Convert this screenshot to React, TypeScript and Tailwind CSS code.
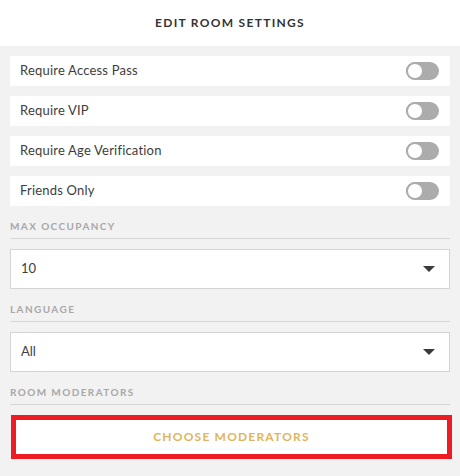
import React from "react"

const font = { fontFamily: "Lato, 'Open Sans', sans-serif" }

function Toggle() {
  return (
    <div className="relative h-[18px] w-[33px] rounded-full bg-[#acacac]">
      <div className="absolute left-0 top-0 h-[18px] w-[18px] rounded-full border-2 border-[#acacac] bg-white" />
    </div>
  )
}

function ToggleRow({ label }: { label: string }) {
  return (
    <div className="flex h-[30px] items-center justify-between bg-white pl-[10px] pr-[11px]">
      <span className="text-[13px] tracking-[0.2px] text-[#3d3d3d]">{label}</span>
      <Toggle />
    </div>
  )
}

function SectionLabel({ text }: { text: string }) {
  return (
    <div className="border-b border-[#d6d6d6] pb-[6px] pt-[14px]">
      <span className="block text-[10px] font-bold leading-[12px] tracking-[1.4px] text-[#a8a8a8]">{text}</span>
    </div>
  )
}

function Select({ value }: { value: string }) {
  return (
    <div className="mt-[10px] flex h-[40px] items-center justify-between border border-[#d4d4d4] bg-white pl-[10px] pr-[14px]">
      <span className="text-[13px] text-[#3d3d3d]">{value}</span>
      <svg width="12" height="7" viewBox="0 0 12 7">
        <path d="M0 0 L12 0 L6 6 Z" fill="#3a3a3a" />
      </svg>
    </div>
  )
}

export default function App() {
  const toggles = ["Require Access Pass", "Require VIP", "Require Age Verification", "Friends Only"]

  return (
    <div className="h-[476px] w-[460px] bg-[#f2f2f2]" style={font}>
      {/* Header */}
      <div className="flex h-[46px] items-center justify-center bg-white">
        <h1 className="text-[12px] font-bold tracking-[1.3px] text-[#333]">EDIT ROOM SETTINGS</h1>
      </div>

      <div className="px-[10px] pt-[10px]">
        <div className="flex flex-col gap-[10px]">
          {toggles.map((t) => (
            <ToggleRow key={t} label={t} />
          ))}
        </div>

        <SectionLabel text="MAX OCCUPANCY" />
        <Select value="10" />

        <SectionLabel text="LANGUAGE" />
        <Select value="All" />

        <SectionLabel text="ROOM MODERATORS" />
      </div>

      <div className="ml-[11px] mt-[10px] flex h-[44px] w-[441px] items-center justify-center border-[5px] border-[#ed1c24] bg-white">
        <span className="text-[12px] font-bold tracking-[1.2px] text-[#e0b45a]">CHOOSE MODERATORS</span>
      </div>
    </div>
  )
}
